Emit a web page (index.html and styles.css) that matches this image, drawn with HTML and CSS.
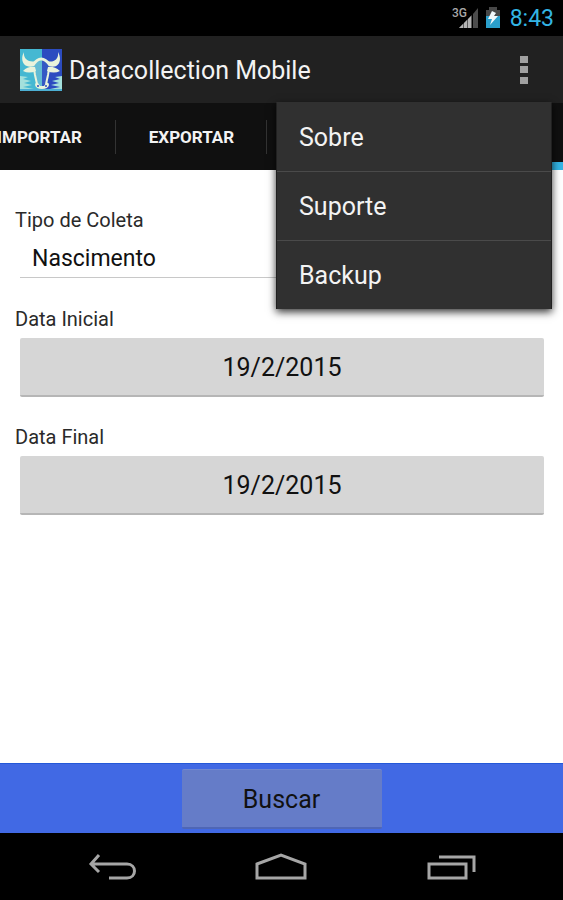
FILE: index.html
```html
<!DOCTYPE html>
<html lang="pt-BR">
<head>
<meta charset="utf-8">
<meta name="viewport" content="width=device-width, initial-scale=1">
<title>Datacollection Mobile</title>
<link rel="stylesheet" href="styles.css">
</head>
<body>
<div class="status">
  <svg class="signal" viewBox="0 0 28 24" aria-hidden="true">
    <text x="0" y="11" class="signal-label">3G</text>
    <path d="M7 22 11 18V22ZM12 17 15 14V22H12ZM16 13 19 10V22H16Z" fill="#b4b4b4"/>
    <path d="M7 22 20 9V22Z" fill="#b4b4b4" opacity=".5"/>
    <path d="M21 8 26 2V22H21Z" fill="#4c4c4c"/>
  </svg>
  <svg class="battery" viewBox="0 0 16 22" aria-hidden="true">
    <path d="M4 0H12V3H15V9H1V3H4Z" fill="#484848"/>
    <path d="M1 9H15V21H1Z" fill="#2a9fcb"/>
    <path d="M7 4 3 12H7L5 18 13 9H9L11 6Z" fill="#f2f8fa"/>
  </svg>
  <span class="clock">8:43</span>
</div>
<header class="action-bar">
  <svg class="logo" viewBox="0 0 42 42" aria-hidden="true">
    <path d="M0 0H42V42H0Z" fill="#45b8d2"/>
    <path d="M22 0H42V42H22Z" fill="#2c4cc0"/>
    <path d="M0 27 8 28 3 30 11 32 4 34 12 36 3 38 14 40H0ZM42 27 35 28 40 30 32 32 39 34 31 36 40 38 30 40H42Z" fill="#a4e0dc"/>
    <path d="M0 40H42V42H0Z" fill="#4cafd3"/>
    <path d="M13 17Q21 7 30 17L29 24 27 37 22 40 17 37 14 24Z" fill="#62bcd4"/>
    <path d="M22 10Q27 12 30 17L29 24 27 37 22 40Z" fill="#3458c4"/>
    <path d="M4 3C-1 12 5 20 14 17L16 12C9 14 3 10 4 3ZM38 3C43 12 38 20 29 17L27 12C34 14 39 10 38 3Z" fill="#e9f3dc"/>
    <path d="M13 16Q21 4 30 16" fill="none" stroke="#e9f3dc" stroke-width="3"/>
    <path d="M3 22Q8 17 15 18L16 22Q9 25 3 22ZM40 22Q34 17 28 18L27 22Q34 25 40 22Z" fill="#e9f3dc"/>
    <path d="M14 20 15 26 17 35M29 20 28 26 26 35" fill="none" stroke="#e9f3dc" stroke-width="2"/>
    <path d="M15 36Q15 33 18 34L20 37H24L26 34Q29 33 29 36 28 40 22 40 16 40 15 36Z" fill="#e9f3dc"/>
    <circle cx="18" cy="37" r="1" fill="#2c4cc0"/><circle cx="26" cy="37" r="1" fill="#2c4cc0"/>
  </svg>
  <h1 class="title">Datacollection Mobile</h1>
  <button class="overflow" type="button" aria-label="Mais opções" aria-expanded="true">
    <svg viewBox="0 0 10 32" aria-hidden="true"><path d="M1 2H9V9H1ZM1 12H9V19H1ZM1 23H9V30H1Z" fill="#a0a0a0"/></svg>
  </button>
  <nav class="menu">
    <a class="menu-item" href="#sobre">Sobre</a>
    <a class="menu-item" href="#suporte">Suporte</a>
    <a class="menu-item" href="#backup">Backup</a>
  </nav>
</header>
<div class="tabs">
  <button class="tab first" type="button">IMPORTAR</button>
  <button class="tab" type="button">EXPORTAR</button>
  <button class="tab selected" type="button" aria-label="Consultar"></button>
</div>
<main class="form">
  <label class="label" for="tipo">Tipo de Coleta</label>
  <select class="spinner" id="tipo"><option>Nascimento</option></select>
  <label class="label" for="inicial">Data Inicial</label>
  <button class="date" id="inicial" type="button">19/2/2015</button>
  <label class="label" for="final">Data Final</label>
  <button class="date" id="final" type="button">19/2/2015</button>
</main>
<footer class="bottom"><button class="search" type="button">Buscar</button></footer>
<nav class="system">
  <button class="key" type="button" aria-label="Voltar">
    <svg viewBox="0 0 50 30" aria-hidden="true"><path d="M12 3 4 12 12 20M4 12H40C50 12 50 26 40 26H22" fill="none" stroke="#a6a6a6" stroke-width="3"/></svg>
  </button>
  <button class="key" type="button" aria-label="Início">
    <svg viewBox="0 0 54 30" aria-hidden="true"><path d="M3 12 27 3 51 12V26H3Z" fill="none" stroke="#a6a6a6" stroke-width="3"/></svg>
  </button>
  <button class="key" type="button" aria-label="Recentes">
    <svg viewBox="0 0 50 30" aria-hidden="true"><path d="M3 12H40V26H3ZM13 5H48V20" fill="none" stroke="#a6a6a6" stroke-width="3"/></svg>
  </button>
</nav>
</body>
</html>
```
FILE: styles.css
```css
* { box-sizing: border-box; }

body {
  margin: 0;
  min-height: 100vh;
  display: flex;
  flex-direction: column;
  background: #fff;
  color: #111;
  font-family: Roboto, sans-serif;
}

button, select {
  margin: 0;
  padding: 0;
  border: 0;
  border-radius: 0;
  background: none;
  color: inherit;
  font: inherit;
}

.status {
  display: flex;
  align-items: center;
  justify-content: flex-end;
  height: 36px;
  padding-right: 9px;
  background: #000;
}

.signal { width: 28px; height: 24px; margin-right: 5px; }
.signal-label { font-size: 12px; font-weight: 500; fill: #a8a8a8; }
.battery { width: 16px; height: 22px; margin-right: 9px; }
.clock { padding-top: 2px; color: #33b5e5; font-size: 23px; line-height: 34px; }

.action-bar {
  position: relative;
  display: flex;
  align-items: center;
  height: 67px;
  padding: 0 19px 0 20px;
  background: #212121;
}

.logo { width: 42px; height: 42px; margin-right: 7px; }

.title {
  flex: 1;
  margin: 0;
  padding-top: 2px;
  color: #f3f3f3;
  font-size: 25px;
  font-weight: 400;
  line-height: 32px;
}

.overflow { display: flex; justify-content: center; width: 40px; }
.overflow svg { width: 10px; height: 32px; }

.menu {
  position: absolute;
  z-index: 1;
  top: 66px;
  right: 11px;
  width: 276px;
  background: #303030;
  border: 1px solid #202020;
  border-top-color: #303030;
  border-bottom: 0;
  box-shadow: 0 3px 8px rgba(0, 0, 0, 0.8);
}

.menu-item {
  display: block;
  padding: 2px 22px 0;
  color: #f3f3f3;
  font-size: 25px;
  line-height: 66px;
  text-decoration: none;
}

.menu-item + .menu-item { border-top: 1px solid #4a4a4a; }

.tabs {
  display: flex;
  height: 67px;
  overflow: hidden;
  background: #101010;
}

.tab {
  display: flex;
  flex: none;
  align-items: center;
  justify-content: center;
  width: 151px;
  color: #f3f3f3;
  font-size: 17px;
  font-weight: 700;
  background: linear-gradient(#333, #333) right center / 1px 34px no-repeat;
}

.tab.first { width: 153px; margin-left: -37px; }

.tab.selected {
  flex: 1;
  margin-left: 151px;
  background: none;
  border-bottom: 8px solid #33b5e5;
}

.form {
  flex: 1;
  display: flex;
  flex-direction: column;
  padding: 38px 15px 0;
}

.label { font-size: 20px; line-height: 24px; color: #2a2a2a; }

.spinner {
  appearance: none;
  height: 38px;
  margin: 8px 5px 29px;
  padding: 0 12px;
  border-bottom: 1px solid #c8c8c8;
  font-size: 23px;
}

.date {
  height: 59px;
  margin: 7px 4px 28px 5px;
  padding-top: 2px;
  background: #d6d6d6;
  border-bottom: 2px solid #b6b6b6;
  border-radius: 2px;
  font-size: 25px;
}

.bottom {
  display: flex;
  align-items: center;
  justify-content: center;
  height: 70px;
  background: #4169e4;
  border-top: 1px solid #2458d8;
}

.search {
  width: 200px;
  height: 60px;
  padding-top: 2px;
  background: #657cc8;
  border-top: 1px solid #7389d0;
  border-bottom: 2px solid #4e66b6;
  border-radius: 2px;
  font-size: 25px;
}

.system {
  display: flex;
  justify-content: center;
  gap: 1px;
  height: 67px;
  background: #000;
}

.key {
  display: flex;
  align-items: center;
  justify-content: center;
  width: 30%;
}

.key svg { height: 30px; }
```
